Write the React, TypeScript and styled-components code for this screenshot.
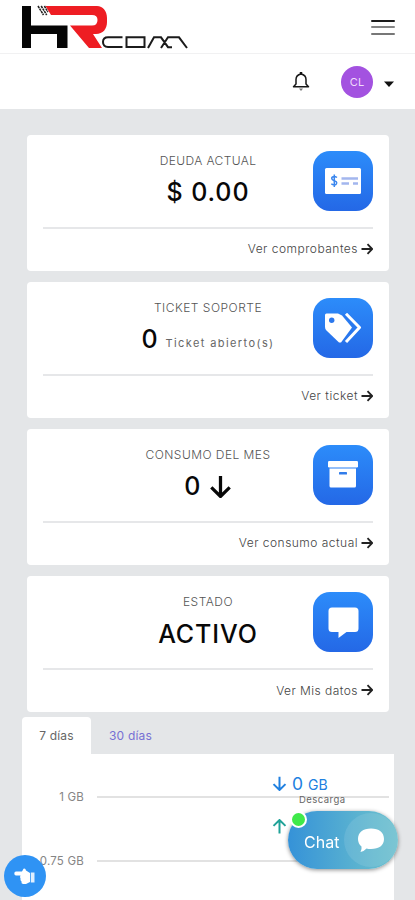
import React from "react";
import styled, { createGlobalStyle } from "styled-components";

const Global = createGlobalStyle`
  * { box-sizing: border-box; }
  body { margin: 0; background: #e4e6e8; font-family: Inter, "Liberation Sans", sans-serif; overflow: hidden; }
`;

const Page = styled.div`
  height: 900px;
  overflow: hidden;
  background: #e4e6e8;
`;

const Header = styled.header`
  display: flex;
  align-items: flex-start;
  justify-content: space-between;
  height: 54px;
  padding: 4px 20px 0;
  background: #fff;
  border-bottom: 1px solid #f1f1f2;
`;

const MenuButton = styled.div`
  display: flex;
  flex-direction: column;
  gap: 4.5px;
  width: 24px;
  margin-top: 15.5px;
`;

const MenuLine = styled.span<{ $color: string }>`
  height: 2px;
  border-radius: 1px;
  background: ${(p) => p.$color};
`;

const UserBar = styled.div`
  display: flex;
  align-items: center;
  justify-content: flex-end;
  height: 55px;
  padding-right: 21px;
  background: #fff;
`;

const Avatar = styled.div`
  display: grid;
  place-items: center;
  width: 32px;
  height: 32px;
  margin: 0 11px 0 31px;
  border-radius: 50%;
  background: #a352e0;
  color: #f0dcfb;
  font-size: 11px;
`;

const Caret = styled.svg`
  margin-top: 4px;
`;

const Cards = styled.main`
  display: grid;
  gap: 11.2px;
  padding: 25.5px 26px 0 27px;
`;

const Card = styled.section`
  height: 136px;
  padding: 16px 16px 0;
  border-radius: 4px;
  background: #fff;
`;

const CardBody = styled.div`
  display: grid;
  grid-template-columns: 60px 1fr 60px;
  height: 78px;
  border-bottom: 2px solid #e6e7e9;
`;

const Summary = styled.div`
  grid-column: 2;
  display: flex;
  flex-direction: column;
  align-items: center;
  white-space: nowrap;
`;

const Title = styled.div<{ $spacing: number }>`
  height: 20px;
  line-height: 20px;
  font-size: 12px;
  font-weight: 300;
  letter-spacing: ${(p) => p.$spacing}px;
  color: #555;
`;

const Value = styled.div`
  display: flex;
  align-items: center;
  height: 43px;
  font-size: 25px;
  font-weight: 500;
  letter-spacing: 0.9px;
  color: #080808;
`;

const Unit = styled.small`
  margin: 8px 0 0 7px;
  font-size: 11px;
  font-weight: 400;
  letter-spacing: 1.4px;
  color: #666;
`;

const Tile = styled.div`
  display: grid;
  place-items: center;
  width: 60px;
  height: 60px;
  border-radius: 17px;
  background: linear-gradient(#2c8cfa, #2468e6);
`;

const CardLink = styled.div<{ $spacing: number }>`
  display: flex;
  align-items: center;
  justify-content: flex-end;
  gap: 3px;
  height: 40px;
  font-size: 12px;
  font-weight: 300;
  letter-spacing: ${(p) => p.$spacing}px;
  color: #444;

  svg { color: #222; }
`;

const Usage = styled.section`
  padding: 5px 21px 0 22px;
`;

const Tabs = styled.nav`
  display: flex;
  height: 37px;
`;

const Tab = styled.div<{ $active?: boolean }>`
  display: grid;
  place-items: center;
  width: ${(p) => (p.$active ? 69 : 79)}px;
  border-radius: 4px 4px 0 0;
  background: ${(p) => (p.$active ? "#fff" : "transparent")};
  color: ${(p) => (p.$active ? "#666" : "#7770d4")};
  font-size: 12px;
  letter-spacing: 0.2px;
`;

const Chart = styled.div`
  position: relative;
  height: 160px;
  padding-top: 33px;
  background: #fff;
`;

const GridRow = styled.div`
  display: flex;
  align-items: center;
  gap: 13px;
  height: 20px;
  margin-bottom: 43.5px;
  padding-right: 5px;
  font-size: 11.5px;
  color: #858585;
`;

const AxisLabel = styled.span`
  width: 62px;
  text-align: right;
  white-space: nowrap;
  letter-spacing: 0.2px;
`;

const Rule = styled.span`
  flex: 1;
  height: 2px;
  background: #e2e2e2;
`;

const Readings = styled.div`
  position: absolute;
  top: 19px;
  left: 250px;
`;

const Reading = styled.div<{ $color: string }>`
  display: flex;
  align-items: center;
  gap: 5px;
  height: 21px;
  color: ${(p) => p.$color};
  font-size: 17.5px;
`;

const ReadingUnit = styled.span`
  margin-top: 2px;
  font-size: 14px;
`;

const Caption = styled.div`
  height: 22px;
  padding-left: 27px;
  line-height: 12px;
  font-size: 9.5px;
  letter-spacing: 0.45px;
  color: #666;
`;

const HandButton = styled.div`
  position: fixed;
  left: 4px;
  top: 855px;
  display: grid;
  place-items: center;
  width: 42px;
  height: 42px;
  border-radius: 50%;
  background: #2f93f4;
`;

const ChatButton = styled.div`
  position: fixed;
  left: 288px;
  top: 811px;
  display: flex;
  align-items: center;
  justify-content: space-between;
  width: 110px;
  height: 58px;
  padding-left: 16px;
  border-radius: 29px;
  background: linear-gradient(90deg, #3592d8, #5bb3d0 65%, #6dc0ce);
  box-shadow: 0 1px 4px rgba(0, 0, 0, 0.45);
  color: #fff;
  font-size: 16px;
`;

const ChatLabel = styled.span`
  margin-top: 3px;
`;

const ChatIcon = styled.span`
  display: grid;
  place-items: center;
  width: 54px;
  height: 54px;
  border-radius: 50%;
  background: rgba(255, 255, 255, 0.1);
`;

const OnlineDot = styled.span`
  position: absolute;
  left: 2px;
  top: 0;
  width: 17px;
  height: 17px;
  border: 2px solid #fff;
  border-radius: 50%;
  background: #3fe94a;
`;

const Logo = () => (
  <svg width="170" height="46" viewBox="20 4 170 46" fill="none" role="img" aria-label="HR com">
    <path d="M22 6H31V25.5H67.5V48H57V34H31V48H22Z" fill="#050505" />
    <path d="M38 6l5.500 9M41.200 6l5.500 9M44.400 6l3.500 6" stroke="#222" strokeWidth="1.600" strokeDasharray="2.4 0.6" />
    <path d="M45.5 6H97C103 6 107 11 107 18V22C107 29 103 34 96 34H93L102 48H89L70 25.5H92Q97.500 25.500 97.500 20Q97.500 15 92 15H51Z" fill="#ee1d23" />
    <path d="M122.500 37.300H108Q103 37.300 103 42T108 47H122.500M126.500 37.300H144.500V47H126.500ZM148 48L154 37.300H161L168 47.200H172M161 48L168 37.300H179L187 48" stroke="#1b1b1b" strokeWidth="2" />
  </svg>
);

const Bell = () => (
  <svg width="18" height="21" viewBox="0 0 18 21" fill="none">
    <path d="M1.500 15.800H16.500L14 13V8.500Q14 4 9 3Q4 4 4 8.500V13Z" stroke="#171717" strokeWidth="1.500" strokeLinejoin="round" />
    <path d="M9 1V3" stroke="#111" strokeWidth="2.500" />
    <path d="M7 17.500H11L9 20Z" fill="#777" />
  </svg>
);

type Direction = "right" | "down" | "up";
const turns: Record<Direction, number> = { right: 0, down: 90, up: 270 };

const Arrow = ({ dir = "right", size = 12, stroke = 1.8 }: { dir?: Direction; size?: number; stroke?: number }) => (
  <svg width={size} height={size} viewBox="0 0 12 12" fill="none">
    <path transform={`rotate(${turns[dir]} 6 6)`} d="M.5 6H11M6.500 1.200L11.200 6L6.500 10.800" stroke="currentColor" strokeWidth={stroke} />
  </svg>
);

const Check = () => (
  <svg width="38" height="28" viewBox="0 0 38 28" fill="none">
    <rect x="1" y="1" width="36" height="26" rx="1.500" fill="#fff" />
    <path d="M13 10.500Q10.500 8.700 8.500 10T9.500 13.500Q13.500 14.500 12.500 16.800T7.300 16.800M10.300 7.500V20" stroke="#3b87ee" strokeWidth="1.500" />
    <path d="M17.500 11.500H34M17.500 16.500H25M29 16.500H34" stroke="#a3b6ee" strokeWidth="2.700" />
  </svg>
);

const TagsIcon = () => (
  <svg width="38" height="30" viewBox="0 0 38 30" fill="none">
    <path d="M1 2Q1 .5 2.500 .5H14L18 2.500L28 14.500L17 29.500H15L2.500 17.500Q1 16 1 14Z" fill="#fff" />
    <circle cx="7.700" cy="7.300" r="2.700" fill="#2b78ed" />
    <path d="M19 1L31 14.500L19.500 29" stroke="#2b78ed" strokeWidth="1.600" />
    <path d="M22 .8L35.500 14.500L22 29" stroke="#fff" strokeWidth="3" strokeLinejoin="round" />
  </svg>
);

const Archive = () => (
  <svg width="30" height="27" viewBox="0 0 30 27">
    <rect width="30" height="6.500" rx="1.200" fill="#fff" />
    <path d="M1.500 7.500H28V25Q28 26.500 26.500 26.500H3Q1.500 26.500 1.500 25Z" fill="#fff" />
    <rect x="11" y="11" width="8" height="2.500" rx=".6" fill="#327dea" />
  </svg>
);

const Message = () => (
  <svg width="31" height="31" viewBox="0 0 31 31">
    <path d="M4 .5H27Q30.500 .5 30.500 4V21.500Q30.500 25 27 25H18.500L10.500 31V25H4Q.5 25 .5 21.500V4Q.5 .5 4 .5Z" fill="#fff" />
  </svg>
);

const Hand = () => (
  <svg width="22" height="17" viewBox="0 0 22 17" fill="#fff">
    <path d="M2 3.500H8L9.500 .8Q11.500 0 12 2.500L16 5V14L12 16H9Q7 15.500 7.500 13.500Q6 12.500 6.500 10.500Q5.500 9 6.500 7.500H2Q.3 7.300 .3 5.500T2 3.500Z" />
    <path d="M16.800 4.500H20.500V14.500H16.800Z" opacity=".85" />
  </svg>
);

const Bubble = () => (
  <svg width="28" height="25" viewBox="0 0 28 25">
    <path d="M14 .5C22 .5 27 4.500 27 11S22 21 14 21Q11.500 21 9.500 20.500Q7.500 23 3.500 24Q5 21 4.500 18.500Q1 15.500 1 11C1 4.500 6 .5 14 .5Z" fill="#fff" />
  </svg>
);

interface CardData {
  title: string;
  titleSpacing: number;
  value: React.ReactNode;
  link: string;
  linkSpacing: number;
  icon: React.ReactNode;
}

const cards: CardData[] = [
  { title: "DEUDA ACTUAL", titleSpacing: 0.4, value: "$ 0.00", link: "Ver comprobantes", linkSpacing: 0.49, icon: <Check /> },
  { title: "TICKET SOPORTE", titleSpacing: 0.5, value: <>0<Unit>Ticket abierto(s)</Unit></>, link: "Ver ticket", linkSpacing: 0.5, icon: <TagsIcon /> },
  { title: "CONSUMO DEL MES", titleSpacing: 0.45, value: <>0&nbsp;<Arrow dir="down" size={23} stroke={1.7} /></>, link: "Ver consumo actual", linkSpacing: 0.48, icon: <Archive /> },
  { title: "ESTADO", titleSpacing: 0.5, value: "ACTIVO", link: "Ver Mis datos", linkSpacing: 0.46, icon: <Message /> },
];

export default function App() {
  return (
    <Page>
      <Global />
      <Header>
        <Logo />
        <MenuButton>
          <MenuLine $color="#1c1c1c" />
          <MenuLine $color="#858585" />
          <MenuLine $color="#777" />
        </MenuButton>
      </Header>
      <UserBar>
        <Bell />
        <Avatar>CL</Avatar>
        <Caret width="10" height="6" viewBox="0 0 10 6"><path d="M0 .5H10L5 6Z" fill="#111" /></Caret>
      </UserBar>
      <Cards>
        {cards.map((card) => (
          <Card key={card.title}>
            <CardBody>
              <Summary>
                <Title $spacing={card.titleSpacing}>{card.title}</Title>
                <Value>{card.value}</Value>
              </Summary>
              <Tile>{card.icon}</Tile>
            </CardBody>
            <CardLink $spacing={card.linkSpacing}>{card.link}<Arrow /></CardLink>
          </Card>
        ))}
      </Cards>
      <Usage>
        <Tabs>
          <Tab $active>7 días</Tab>
          <Tab>30 días</Tab>
        </Tabs>
        <Chart>
          <GridRow><AxisLabel>1 GB</AxisLabel><Rule /></GridRow>
          <GridRow><AxisLabel>0.75 GB</AxisLabel><Rule /></GridRow>
          <Readings>
            <Reading $color="#2080e0"><Arrow dir="down" size={15} stroke={1.6} />0 <ReadingUnit>GB</ReadingUnit></Reading>
            <Caption>Descarga</Caption>
            <Reading $color="#20a298"><Arrow dir="up" size={15} stroke={1.6} /></Reading>
          </Readings>
        </Chart>
      </Usage>
      <HandButton><Hand /></HandButton>
      <ChatButton>
        <ChatLabel>Chat</ChatLabel>
        <ChatIcon><Bubble /></ChatIcon>
        <OnlineDot />
      </ChatButton>
    </Page>
  );
}
